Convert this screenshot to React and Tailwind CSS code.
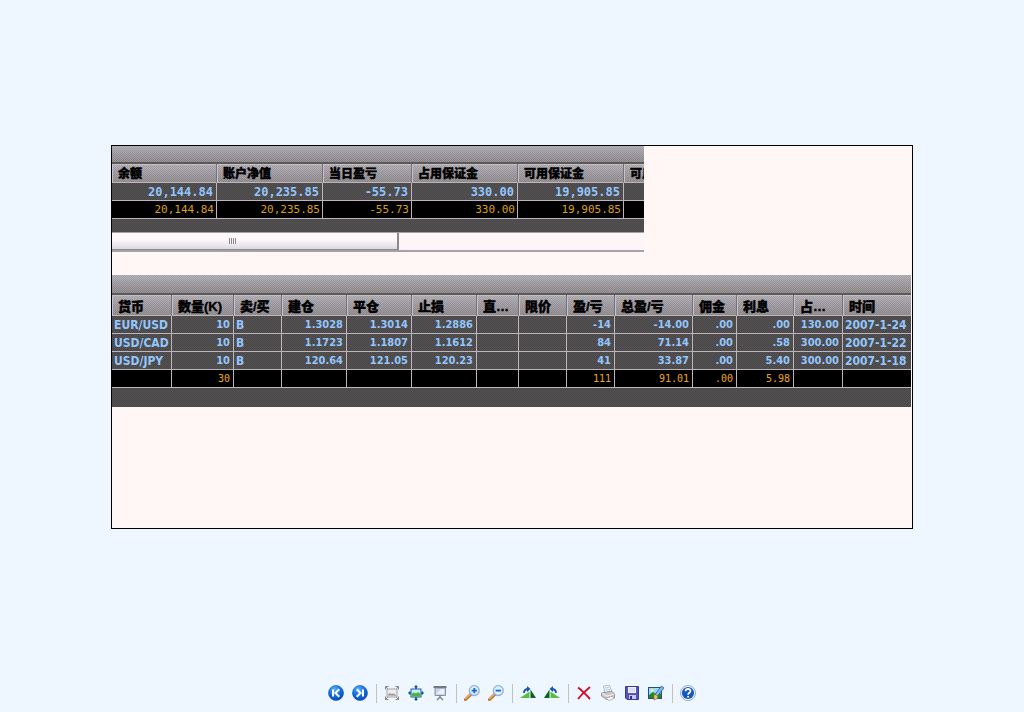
import React from "react";

const accountColumns = [
  { label: "余额", col: "w-[105px]", live: "20,144.84", total: "20,144.84" },
  { label: "账户净值", col: "w-[106px]", live: "20,235.85", total: "20,235.85" },
  { label: "当日盈亏", col: "w-[89px]", live: "-55.73", total: "-55.73" },
  { label: "占用保证金", col: "w-[106px]", live: "330.00", total: "330.00" },
  { label: "可用保证金", col: "w-[106px]", live: "19,905.85", total: "19,905.85" },
  { label: "可用", col: "w-auto", live: "", total: "" },
];

const positionColumns = [
  { label: "货币", col: "w-[60px]", left: true },
  { label: "数量(K)", col: "w-[62px]" },
  { label: "卖/买", col: "w-[48px]", left: true },
  { label: "建仓", col: "w-[65px]" },
  { label: "平仓", col: "w-[65px]" },
  { label: "止损", col: "w-[65px]" },
  { label: "直…", col: "w-[42px]" },
  { label: "限价", col: "w-[48px]" },
  { label: "盈/亏", col: "w-[48px]" },
  { label: "总盈/亏", col: "w-[78px]" },
  { label: "佣金", col: "w-[44px]" },
  { label: "利息", col: "w-[57px]" },
  { label: "占…", col: "w-[49px]" },
  { label: "时间", col: "w-auto", left: true },
];

const positions = [
  ["EUR/USD", "10", "B", "1.3028", "1.3014", "1.2886", "", "", "-14", "-14.00", ".00", ".00", "130.00", "2007-1-24"],
  ["USD/CAD", "10", "B", "1.1723", "1.1807", "1.1612", "", "", "84", "71.14", ".00", ".58", "300.00", "2007-1-22"],
  ["USD/JPY", "10", "B", "120.64", "121.05", "120.23", "", "", "41", "33.87", ".00", "5.40", "300.00", "2007-1-18"],
];

const positionTotals = ["", "30", "", "", "", "", "", "", "111", "91.01", ".00", "5.98", "", ""];

const metal =
  "bg-[repeating-conic-gradient(#ffffff14_0_25%,#00000014_0_50%),linear-gradient(#b4b1b5,#a29da6_45%,#918c8c)] bg-[length:2px_2px,100%_100%]";
const dark =
  "bg-[#4e4b4d] bg-[image:repeating-conic-gradient(#ffffff08_0_25%,#0000000c_0_50%)] bg-[length:2px_2px]";
const headCell =
  "overflow-hidden whitespace-nowrap border-r border-b border-r-[#77717a] border-b-[#bdb4be] pt-[3px] pb-0 pl-[6px] text-left font-black text-black shadow-[inset_1px_1px_0_#c4c0c6] last:border-r-0 [-webkit-text-stroke:0.4px_black]";
const bodyCell = "overflow-hidden whitespace-nowrap border-r border-b border-[#bdb4be] py-0 last:border-r-0";

function TitleBar({ tall }) {
  return (
    <div className={`${metal} ${tall ? "h-5" : "h-[18px]"} border-b-2 border-[#5c595b]`} />
  );
}

function AccountPanel() {
  return (
    <section aria-label="账户" className="w-[532px] max-w-full overflow-hidden">
      <TitleBar />
      <table className="w-full table-fixed border-separate border-spacing-0">
        <colgroup>
          {accountColumns.map((c, i) => (
            <col key={i} className={c.col} />
          ))}
        </colgroup>
        <thead className={metal}>
          <tr className="h-[19px] text-[12px] leading-[15px]">
            {accountColumns.map((c, i) => (
              <th key={i} className={headCell}>{c.label}</th>
            ))}
          </tr>
        </thead>
        <tbody>
          <tr className={`${dark} h-[18px] font-['DejaVu_Sans_Mono',monospace] text-[12px] leading-[16px] font-bold text-[#92c6fc]`}>
            {accountColumns.map((c, i) => (
              <td key={i} className={`${bodyCell} pr-[3px] text-right`}>{c.live}</td>
            ))}
          </tr>
          <tr className="h-[18px] bg-black font-['DejaVu_Sans_Mono',monospace] text-[11px] leading-[16px] text-[#dfa010]">
            {accountColumns.map((c, i) => (
              <td key={i} className={`${bodyCell} pr-[2px] text-right`}>{c.total}</td>
            ))}
          </tr>
        </tbody>
      </table>
      <div className={`${dark} h-[13px]`} />
      <div className="h-5 border-t border-b-2 border-[#a6a1a8] bg-[#fdf5f8]">
        <div
          role="scrollbar"
          aria-orientation="horizontal"
          aria-label="水平滚动"
          aria-valuenow={0}
          className="flex h-full w-[287px] items-center justify-center border-r-2 border-b border-[#8d888f] bg-linear-to-b from-[#fff8fb] from-40% to-[#dcdbe2] pr-[45px]"
        >
          <span className="flex h-[6px] gap-px">
            <i className="w-px bg-[#8d888f]" />
            <i className="w-px bg-[#8d888f]" />
            <i className="w-px bg-[#8d888f]" />
            <i className="w-px bg-[#8d888f]" />
          </span>
        </div>
      </div>
    </section>
  );
}

function PositionsPanel() {
  return (
    <section aria-label="持仓" className="mt-[23px] mr-px">
      <TitleBar tall />
      <table className="w-full table-fixed border-separate border-spacing-0">
        <colgroup>
          {positionColumns.map((c, i) => (
            <col key={i} className={c.col} />
          ))}
        </colgroup>
        <thead className={metal}>
          <tr className="h-[21px] text-[13px] leading-[17px]">
            {positionColumns.map((c, i) => (
              <th key={i} className={headCell}>{c.label}</th>
            ))}
          </tr>
        </thead>
        <tbody>
          {positions.map((row) => (
            <tr
              key={row[0]}
              className={`${dark} h-[18px] font-['DejaVu_Sans_Condensed','DejaVu_Sans',sans-serif] leading-[16px] font-bold text-[#92c6fc]`}
            >
              {row.map((value, i) => (
                <td
                  key={i}
                  className={`${bodyCell} ${positionColumns[i].left ? "pl-[2px] text-left text-[12px] leading-[16px]" : "pr-[3px] text-right text-[11px] leading-[16px]"}`}
                >
                  {value}
                </td>
              ))}
            </tr>
          ))}
          <tr className="h-[18px] bg-black font-['DejaVu_Sans_Mono',monospace] text-[10px] leading-[16px] text-[#efa818]">
            {positionTotals.map((value, i) => (
              <td key={i} className={`${bodyCell} pr-[3px] text-right`}>{value}</td>
            ))}
          </tr>
        </tbody>
      </table>
      <div className={`${dark} h-[19px]`} />
    </section>
  );
}

function Disc({ id, children }) {
  return (
    <>
      <defs>
        <radialGradient id={id} cx="0.4" cy="0.25" r="0.8">
          <stop offset="0" stopColor="#58b4ff" />
          <stop offset="0.5" stopColor="#1470de" />
          <stop offset="1" stopColor="#0a46b4" />
        </radialGradient>
      </defs>
      <circle cx="8" cy="8" r="7.5" fill={`url(#${id})`} stroke="#0c4fac" strokeWidth="0.6" />
      {children}
    </>
  );
}

const drawings = {
  previous: (
    <Disc id="disc-prev">
      <path d="M5 4.5v7M11.3 4.2 7.4 8l3.9 3.8" fill="none" stroke="#fff" strokeWidth="2" />
    </Disc>
  ),
  next: (
    <Disc id="disc-next">
      <path d="M11 4.5v7M4.7 4.2 8.6 8l-3.9 3.8" fill="none" stroke="#fff" strokeWidth="2" />
    </Disc>
  ),
  fit: (
    <>
      <rect x="3" y="4" width="10" height="8" fill="#ededed" stroke="#a2a2a2" />
      <path d="M4 10.5V9.5L6 8l1.500 1L9.500 8.500l2.500 1.200v1z" fill="#9a9a9a" />
      <path d="M1.500 4.500v-3h3M11.500 1.500h3v3M1.500 11.500v3h3M11.500 14.500h3v-3" fill="none" stroke="#858585" />
      <path d="m1.500 1.500 2 2M14.500 1.500l-2 2M1.500 14.500l2-2M14.500 14.500l-2-2" stroke="#858585" />
    </>
  ),
  actual: (
    <>
      <rect x="3" y="4" width="10" height="8" fill="#c5ebff" stroke="#245fa8" />
      <path d="M3.500 11.500V9l2-1.500L8 8.500 10 7l2.500 2v2.500z" fill="#4fb52f" />
      <path d="m8 0 2.2 2.2H8.8V4H7.2V2.2H5.8zM8 16l2.2-2.2H8.8V12H7.2v1.8H5.8zM0 8l2.2-2.2v1.4H3v1.6h-.8v1.4zM16 8l-2.2-2.2v1.4H13v1.6h.8v1.4z" fill="#174e9e" />
    </>
  ),
  slideshow: (
    <>
      <path d="M3 3h10.500v7.500H3z" fill="#c9d3ee" stroke="#8790ac" />
      <path d="M4 9 9 4h3v5z" fill="#fff" opacity="0.7" />
      <path d="M1.500 2h13" stroke="#737885" strokeWidth="2" />
      <path d="M8 10.500v2M5 15l3-3 3 3" fill="none" stroke="#767b87" strokeWidth="1.4" />
    </>
  ),
  zoomIn: (
    <>
      <path d="M7 9.2 1.5 14.5" stroke="#b66b2e" strokeWidth="3" strokeLinecap="round" />
      <path d="M6.5 9 1.5 13.8" stroke="#f6ae60" strokeWidth="1.4" strokeLinecap="round" />
      <circle cx="10.3" cy="5.6" r="4.9" fill="#dff2ff" stroke="#8bafe0" strokeWidth="1.3" />
      <path d="M7.6 5.6h5.4M10.3 2.9v5.4" stroke="#1767d2" strokeWidth="1.8" />
    </>
  ),
  zoomOut: (
    <>
      <path d="M7 9.2 1.5 14.5" stroke="#b66b2e" strokeWidth="3" strokeLinecap="round" />
      <path d="M6.5 9 1.5 13.8" stroke="#f6ae60" strokeWidth="1.4" strokeLinecap="round" />
      <circle cx="10.3" cy="5.6" r="4.9" fill="#dff2ff" stroke="#8bafe0" strokeWidth="1.3" />
      <path d="M7.6 5.6h5.4" stroke="#1767d2" strokeWidth="1.8" />
    </>
  ),
  clockwise: (
    <>
      <path d="M0 13h9.500V6.500z" fill="#58be42" />
      <path d="M10.500 4.500V13H16z" fill="#08621c" />
      <path d="M4 8c0-3 1.5-4 4.5-4" fill="none" stroke="#1854ae" strokeWidth="1.8" />
      <path d="m7 1 3.5 3L7 7z" fill="#1854ae" />
    </>
  ),
  counterclockwise: (
    <>
      <path d="M16 13H6.500V6.500z" fill="#58be42" />
      <path d="M5.500 4.500V13H0z" fill="#08621c" />
      <path d="M12 8c0-3-1.5-4-4.5-4" fill="none" stroke="#1854ae" strokeWidth="1.8" />
      <path d="M9 1 5.500 4 9 7z" fill="#1854ae" />
    </>
  ),
  remove: <path d="M2 2.5c4 3 8 7 12 11.5M14 2C9 6 5 10 2 14" fill="none" stroke="#d40d2c" strokeWidth="1.9" />,
  print: (
    <>
      <path d="m3.500 1 6-.5 2.500 6.500-7 1z" fill="#fff" stroke="#8fa6cc" strokeWidth="0.8" />
      <path d="m5 3 4-.4M5.6 5l4.4-.4" stroke="#8daed7" strokeWidth="0.8" />
      <path d="m1.5 8 10-2 3 3v3.5l-8 2-5-3.5z" fill="#c8c8cc" stroke="#85858a" strokeWidth="0.8" />
      <path d="m2 8.2 5 3 7-2" fill="none" stroke="#f5f5f5" />
      <path d="m6 13 6-1.5 2.5 1.8L9 15.5z" fill="#fff" stroke="#93939a" strokeWidth="0.7" />
      <path d="M12 10.8h1.5" stroke="#e7b735" />
    </>
  ),
  save: (
    <>
      <path d="M1.5 1.5h13v13H3L1.5 13z" fill="#5454bc" stroke="#3a3a98" />
      <path d="M4 2h8v6H4z" fill="#f2f3ff" />
      <path d="M5 4h6M5 6h6" stroke="#b8bad8" strokeWidth="0.8" />
      <path d="M5 10h7v4H5z" fill="#c9cae0" />
      <path d="M6 11h2v3H6z" fill="#30308c" />
    </>
  ),
  edit: (
    <>
      <rect x="0.5" y="2.5" width="13" height="11" fill="#96d8ff" stroke="#204f86" />
      <path d="m1 10 4-3 3 2 2-2 3 2v4H1z" fill="#258330" />
      <circle cx="4" cy="5.3" r="1.5" fill="#fff183" />
      <path d="M7 9.500 13.500 1 16 3l-6.500 8z" fill="#7ebbec" stroke="#1d5a9f" strokeWidth="0.8" />
      <path d="m6 9.500 3.500 1v3L6 15z" fill="#f0c764" stroke="#9b7322" strokeWidth="0.7" />
    </>
  ),
  help: (
    <>
      <circle cx="8" cy="8" r="7.5" fill="#f2f7ff" stroke="#8096bb" strokeWidth="0.8" />
      <circle cx="8" cy="8" r="6.1" fill="#1759bb" />
      <path d="M5.6 6.3c0-3.1 4.9-3.1 4.9-.2 0 1.8-2.4 1.6-2.4 3.6M8.1 11v1.6" fill="none" stroke="#fff" strokeWidth="1.7" />
    </>
  ),
};

const toolGroups = [
  [["previous", "上一个图像"], ["next", "下一个图像"]],
  [["fit", "最合适"], ["actual", "实际大小"], ["slideshow", "开始幻灯片"]],
  [["zoomIn", "放大"], ["zoomOut", "缩小"]],
  [["clockwise", "顺时针旋转"], ["counterclockwise", "逆时针旋转"]],
  [["remove", "删除"], ["print", "打印"], ["save", "复制到"], ["edit", "编辑"]],
  [["help", "帮助"]],
];

function Toolbar() {
  return (
    <div role="toolbar" aria-label="图片工具" className="flex h-[38px] items-center justify-center">
      {toolGroups.map((group, g) => (
        <div key={g} className="flex items-center">
          {g > 0 && (
            <div className="flex w-2 justify-center">
              <span className="h-[19px] w-px bg-[#c5c2b8]" />
            </div>
          )}
          {group.map(([name, label]) => (
            <button key={name} type="button" aria-label={label} className="flex h-6 w-6 items-center justify-center">
              <svg viewBox="0 0 16 16" className="h-4 w-4" aria-hidden="true">
                {drawings[name]}
              </svg>
            </button>
          ))}
        </div>
      ))}
    </div>
  );
}

export default function App() {
  return (
    <div className="flex min-h-screen flex-col bg-[#eef7ff] font-['Liberation_Sans','Noto_Sans_CJK_SC',sans-serif]">
      <main className="flex flex-1 items-center justify-center">
        <div className="w-full max-w-[802px] border border-black bg-[#fff6f6] pb-[121px]">
          <AccountPanel />
          <PositionsPanel />
        </div>
      </main>
      <Toolbar />
    </div>
  );
}
